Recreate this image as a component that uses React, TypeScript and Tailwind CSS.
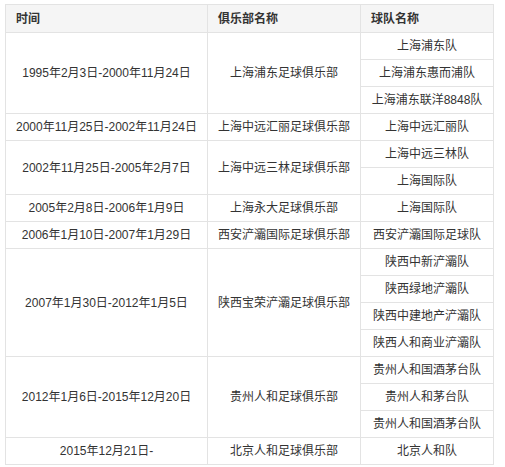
import React from 'react'

type Era = {
  period: string
  club: string
  teams: string[]
}

const eras: Era[] = [
  { period: '1995年2月3日-2000年11月24日', club: '上海浦东足球俱乐部', teams: ['上海浦东队', '上海浦东惠而浦队', '上海浦东联洋8848队'] },
  { period: '2000年11月25日-2002年11月24日', club: '上海中远汇丽足球俱乐部', teams: ['上海中远汇丽队'] },
  { period: '2002年11月25日-2005年2月7日', club: '上海中远三林足球俱乐部', teams: ['上海中远三林队', '上海国际队'] },
  { period: '2005年2月8日-2006年1月9日', club: '上海永大足球俱乐部', teams: ['上海国际队'] },
  { period: '2006年1月10日-2007年1月29日', club: '西安浐灞国际足球俱乐部', teams: ['西安浐灞国际足球队'] },
  { period: '2007年1月30日-2012年1月5日', club: '陕西宝荣浐灞足球俱乐部', teams: ['陕西中新浐灞队', '陕西绿地浐灞队', '陕西中建地产浐灞队', '陕西人和商业浐灞队'] },
  { period: '2012年1月6日-2015年12月20日', club: '贵州人和足球俱乐部', teams: ['贵州人和国酒茅台队', '贵州人和茅台队', '贵州人和国酒茅台队'] },
  { period: '2015年12月21日-', club: '北京人和足球俱乐部', teams: ['北京人和队'] },
]

const cell = 'border border-[#e3e3e3] text-center align-middle px-2 p-0'

export default function App() {
  return (
    <div className="bg-white w-[505px] h-[467px] pt-1 pl-[5px] font-['Liberation_Sans','Noto_Sans_CJK_SC',sans-serif] text-[12px] text-[#333]">
      <table className="border-collapse table-fixed w-[488px]">
        <colgroup>
          <col className="w-[202px]" />
          <col className="w-[153px]" />
          <col className="w-[133px]" />
        </colgroup>
        <thead>
          <tr className="h-[28px] bg-[#f5f5f5]">
            <th className="border border-[#e3e3e3] text-left font-bold pl-[10px]">时间</th>
            <th className="border border-[#e3e3e3] text-left font-bold pl-[10px]">俱乐部名称</th>
            <th className="border border-[#e3e3e3] text-left font-bold pl-[10px]">球队名称</th>
          </tr>
        </thead>
        <tbody>
          {eras.map((era, i) =>
            era.teams.map((team, j) => (
              <tr key={`${i}-${j}`} className="h-[27px]">
                {j === 0 && (
                  <>
                    <td rowSpan={era.teams.length} className={cell}>{era.period}</td>
                    <td rowSpan={era.teams.length} className={cell}>{era.club}</td>
                  </>
                )}
                <td className={cell}>{team}</td>
              </tr>
            ))
          )}
        </tbody>
      </table>
    </div>
  )
}
